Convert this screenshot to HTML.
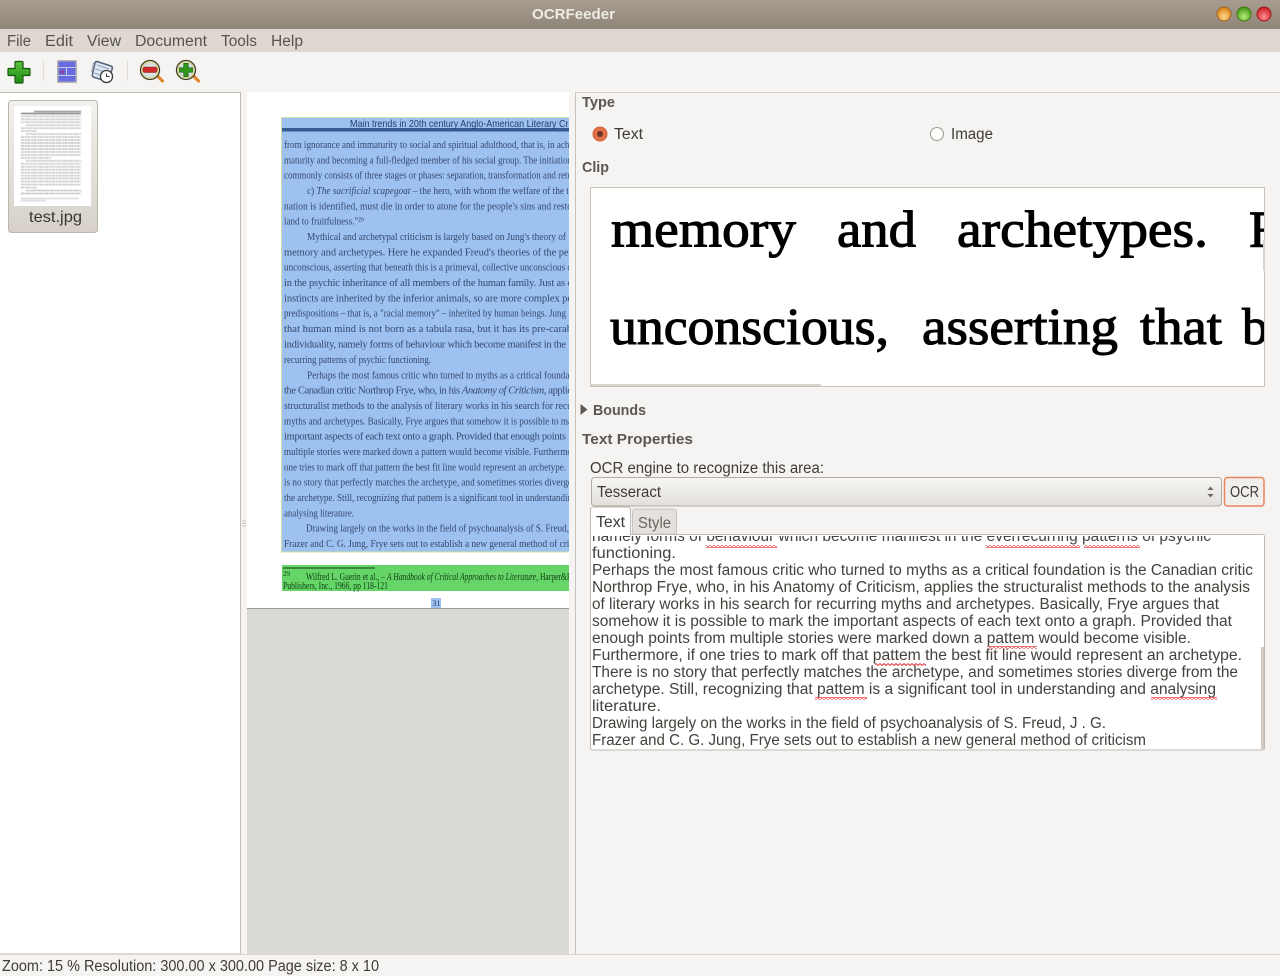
<!DOCTYPE html>
<html lang="en"><head><meta charset="utf-8"><title>OCRFeeder</title>
<style>
html,body{margin:0;padding:0;width:1280px;height:976px;overflow:hidden;background:#f5f4f2}
svg{display:block}
.u{font-family:"Liberation Sans",sans-serif;font-size:15.5px;fill:#3f3c38}
.b{font-weight:bold;fill:#5b5751;font-size:15px}
.d{font-family:"Liberation Serif",serif;font-size:10.5px;fill:#34496f}
.c{font-family:"Liberation Serif",serif;font-size:52px;fill:#000;stroke:#000;stroke-width:1.1}
.t{font-size:15.5px;fill:#45413d;font-family:"Liberation Sans",sans-serif}
</style></head><body>
<svg width="1280" height="976" viewBox="0 0 1280 976" xmlns="http://www.w3.org/2000/svg">
<defs>
<linearGradient id="tb" x1="0" y1="0" x2="0" y2="1"><stop offset="0" stop-color="#a79c8f"/><stop offset="1" stop-color="#8f8578"/></linearGradient>
<linearGradient id="th" x1="0" y1="0" x2="0" y2="1"><stop offset="0" stop-color="#f3f1ee"/><stop offset="1" stop-color="#d6d0c9"/></linearGradient>
<linearGradient id="cb" x1="0" y1="0" x2="0" y2="1"><stop offset="0" stop-color="#f8f7f5"/><stop offset="1" stop-color="#e2dfdb"/></linearGradient>
<linearGradient id="pl" x1="0" y1="0" x2="0" y2="1"><stop offset="0" stop-color="#5cc43c"/><stop offset="1" stop-color="#1f8a18"/></linearGradient>
<radialGradient id="o" cx=".5" cy=".7" r=".6"><stop offset="0" stop-color="#ffd58a"/><stop offset="1" stop-color="#df8a1f"/></radialGradient>
<radialGradient id="g" cx=".5" cy=".7" r=".6"><stop offset="0" stop-color="#b8ec7a"/><stop offset="1" stop-color="#4d9f1e"/></radialGradient>
<radialGradient id="r" cx=".5" cy=".7" r=".6"><stop offset="0" stop-color="#fa8f8f"/><stop offset="1" stop-color="#d5262a"/></radialGradient>
<radialGradient id="lens" cx=".5" cy=".5" r=".6"><stop offset="0" stop-color="#eef4f6"/><stop offset="1" stop-color="#c0ced6"/></radialGradient>
<pattern id="wv" width="4" height="3" patternUnits="userSpaceOnUse"><path d="M0 .5L2 2.500L4 .5" fill="none" stroke="#e8393a" stroke-width="1"/></pattern>
<clipPath id="dc"><rect x="247" y="92" width="322" height="520"/></clipPath>
<clipPath id="cc"><rect x="591" y="188" width="673" height="197"/></clipPath>
<clipPath id="tc"><rect x="591" y="536" width="670" height="213"/></clipPath>
<filter id="bl" x="-5%" y="-5%" width="110%" height="110%"><feGaussianBlur stdDeviation=".35"/></filter>
<filter id="bl2" x="-5%" y="-5%" width="110%" height="110%"><feGaussianBlur stdDeviation=".4"/></filter>
</defs>

<!-- title bar -->
<rect width="1280" height="29" fill="url(#tb)"/>
<text x="532" y="19" textLength="83" lengthAdjust="spacingAndGlyphs" font-family="Liberation Sans" font-weight="bold" font-size="15" fill="#efebe5">OCRFeeder</text>
<circle cx="1224" cy="14" r="7" fill="url(#o)" stroke="#a0601a"/>
<circle cx="1244" cy="14" r="7" fill="url(#g)" stroke="#3f7a16"/>
<circle cx="1264" cy="14" r="7" fill="url(#r)" stroke="#9c1c20"/>

<!-- menu -->
<rect y="29" width="1280" height="23" fill="#dfd8d2"/>
<g class="u" style="fill:#57534d">
<text x="7" y="46" textLength="24" lengthAdjust="spacingAndGlyphs">File</text>
<text x="45" y="46" textLength="28" lengthAdjust="spacingAndGlyphs">Edit</text>
<text x="87" y="46" textLength="34" lengthAdjust="spacingAndGlyphs">View</text>
<text x="135" y="46" textLength="72" lengthAdjust="spacingAndGlyphs">Document</text>
<text x="221" y="46" textLength="36" lengthAdjust="spacingAndGlyphs">Tools</text>
<text x="271" y="46" textLength="32" lengthAdjust="spacingAndGlyphs">Help</text>
</g>

<!-- toolbar -->
<path d="M16 61.500h6a1 1 0 0 1 1 1v6h6a1 1 0 0 1 1 1v5a1 1 0 0 1-1 1h-6v6.500a1 1 0 0 1-1 1h-6a1 1 0 0 1-1-1v-6.500h-6a1 1 0 0 1-1-1v-5a1 1 0 0 1 1-1h6v-6a1 1 0 0 1 1-1z" fill="url(#pl)" stroke="#14570c" stroke-width="1.200"/>
<rect x="43" y="60" width="1" height="21" fill="#e0ddd9"/>
<rect x="127" y="60" width="1" height="21" fill="#e0ddd9"/>
<rect x="57" y="60" width="20" height="23" rx="1" fill="#b4b4b4"/>
<rect x="58.500" y="61.500" width="17" height="20" fill="#666ce0"/>
<path d="M58.500 67.500h17M58.500 75.500h17M66.500 68v7" stroke="#c6c8e6" stroke-width="1"/>
<path d="M62 69l1 2h2l-1.500 1.300.6 2-2.100-1.200-2.100 1.200.6-2-1.500-1.300h2z" fill="#8e3da0"/>
<g>
<path d="M97 61.500l14 4.500a2 2 0 0 1 1.300 2.400l-3.600 11.500a2 2 0 0 1-2.500 1.300l-12.500-4a2 2 0 0 1-1.300-2.500l2.600-12a2 2 0 0 1 2-1.200z" fill="#dfe7f0" stroke="#4f6077" stroke-width="1.500"/>
<path d="M97 65l12 4M95.500 69l10 3.200M94.500 73l7 2.300" stroke="#8ea2bc" stroke-width="1"/>
<path d="M94 63l-2 9" stroke="#7e8da2" stroke-width="2" stroke-dasharray="1.500 1"/>
<circle cx="106.500" cy="76.500" r="6" fill="#fff" stroke="#3a3a3a" stroke-width="1.300"/>
<path d="M106.500 73.500v3h3.200" fill="none" stroke="#333" stroke-width="1"/>
</g>
<g>
<path d="M157 75.500l5.500 5.500" stroke="#e0862a" stroke-width="3.200" stroke-linecap="round"/>
<circle cx="150" cy="70" r="9.500" fill="url(#lens)" stroke="#3b3a28" stroke-width="1.300"/>
<circle cx="150" cy="70" r="8.200" fill="none" stroke="#dcd888" stroke-width="1.300"/>
<rect x="143" y="67" width="14" height="5.500" rx="2" fill="#d22a2a" stroke="#8a1818" stroke-width=".6"/>
</g>
<g>
<path d="M193 75.500l5.500 5.500" stroke="#e0862a" stroke-width="3.200" stroke-linecap="round"/>
<circle cx="186" cy="70" r="9.500" fill="url(#lens)" stroke="#3b3a28" stroke-width="1.300"/>
<circle cx="186" cy="70" r="8.200" fill="none" stroke="#dcd888" stroke-width="1.300"/>
<path d="M183.800 63.500h4.400v4.300h4.300v4.400h-4.300v4.300h-4.400v-4.300h-4.300v-4.400h4.300z" fill="#2e9a1e" stroke="#14570c" stroke-width=".7"/>
</g>

<!-- left panel -->
<rect x="-1" y="92.500" width="241.500" height="861.500" fill="#fff" stroke="#c4bdb3"/>
<rect x="8.500" y="100.500" width="89" height="132" rx="3" fill="url(#th)" stroke="#bdb6ac"/>
<rect x="14" y="106" width="77" height="100" fill="#fff"/>
<g filter="url(#bl2)">
<path d="M34 111.500h47" stroke="#666" stroke-width="1"/>
<path d="M21 113.500h60" stroke="#444" stroke-width="1"/>
<path d="M21 116.300h60M21 119.300h60M21 122.200h60M26 125.200h55M21 128.200h60M21 131.100h16M26 134.100h55M21 137.100h60M21 140h60M21 143h60M21 146h60M21 149h60M21 151.900h60M21 154.900h60M21 157.900h30M26 160.800h55M21 163.800h60M21 166.800h60M21 169.700h60M21 172.700h60M21 175.700h60M21 178.600h60M21 181.600h60M21 184.600h60M21 187.600h16M26 190.500h55M21 193.500h60" stroke="#555" stroke-width=".9" stroke-dasharray="3 .7 2 .5" opacity=".6"/>
<path d="M21 198.500h58M21 200.500h25" stroke="#777" stroke-width=".8" stroke-dasharray="2 .6" opacity=".7"/>
</g>
<text x="29" y="222" textLength="53" lengthAdjust="spacingAndGlyphs" class="u" style="font-size:16px;fill:#38352f">test.jpg</text>

<!-- paned handle -->
<path d="M242 521h4M242 523.500h4M242 526h4M571 521h4M571 523.500h4M571 526h4" stroke="#c9c4bd" stroke-width="1"/>

<!-- document area -->
<rect x="247" y="92" width="322" height="862" fill="#dbd9d4"/>
<rect x="247" y="92" width="322" height="516" fill="#fff"/>
<rect x="247" y="608" width="322" height="1" fill="#9a9a98"/>
<rect x="281.500" y="117.500" width="290" height="434.500" fill="#9dc1f0" stroke="#cfe0a8"/>
<rect x="282" y="128" width="290" height="3.500" fill="#365c92"/>
<rect x="282" y="565" width="290" height="26" fill="#64d566"/>
<rect x="431" y="598" width="10" height="10" fill="#9dc1f0"/>
<rect x="283" y="567.500" width="92" height="1" fill="#0e3a12"/>

<g clip-path="url(#dc)" filter="url(#bl)">
<text x="350" y="127" textLength="225" lengthAdjust="spacingAndGlyphs" font-family="Liberation Sans" font-size="10.500" fill="#243f72">Main trends in 20th century Anglo-American Literary Criti</text>
<g class="d">
<text x="284" y="148" textLength="288" lengthAdjust="spacingAndGlyphs">from ignorance and immaturity to social and spiritual adulthood, that is, in achi</text>
<text x="284" y="163.300" textLength="288" lengthAdjust="spacingAndGlyphs">maturity and becoming a full-fledged member of his social group. The initiation</text>
<text x="284" y="178.700" textLength="288" lengthAdjust="spacingAndGlyphs">commonly consists of three stages or phases: separation, transformation and retu</text>
<text x="307" y="194" textLength="265" lengthAdjust="spacingAndGlyphs">c) <tspan font-style="italic">The sacrificial scapegoat</tspan> – the hero, with whom the welfare of the tr</text>
<text x="284" y="209.300" textLength="288" lengthAdjust="spacingAndGlyphs">nation is identified, must die in order to atone for the people's sins and resto</text>
<text x="284" y="224.700" textLength="80" lengthAdjust="spacingAndGlyphs">land to fruitfulness."²⁹</text>
<text x="307" y="240" textLength="259" lengthAdjust="spacingAndGlyphs">Mythical and archetypal criticism is largely based on Jung's theory of</text>
<text x="284" y="255.300" textLength="288" lengthAdjust="spacing">memory and archetypes. Here he expanded Freud's theories of the per</text>
<text x="284" y="270.700" textLength="288" lengthAdjust="spacingAndGlyphs">unconscious, asserting that beneath this is a primeval, collective unconscious o</text>
<text x="284" y="286" textLength="288" lengthAdjust="spacing">in the psychic inheritance of all members of the human family. Just as c</text>
<text x="284" y="301.300" textLength="288" lengthAdjust="spacing">instincts are inherited by the inferior animals, so are more complex pe</text>
<text x="284" y="316.700" textLength="282" lengthAdjust="spacingAndGlyphs">predispositions – that is, a "racial memory" – inherited by human beings. Jung</text>
<text x="284" y="332" textLength="288" lengthAdjust="spacing">that human mind is not born as a tabula rasa, but it has its pre-carab</text>
<text x="284" y="347.300" textLength="282" lengthAdjust="spacing">individuality, namely forms of behaviour which become manifest in the</text>
<text x="284" y="363" textLength="147" lengthAdjust="spacingAndGlyphs">recurring patterns of psychic functioning.</text>
<text x="307" y="378.300" textLength="265" lengthAdjust="spacingAndGlyphs">Perhaps the most famous critic who turned to myths as a critical foundat</text>
<text x="284" y="393.700" textLength="288" lengthAdjust="spacing">the Canadian critic Northrop Frye, who, in his <tspan font-style="italic">Anatomy of Criticism</tspan>, applie</text>
<text x="284" y="409" textLength="288" lengthAdjust="spacingAndGlyphs">structuralist methods to the analysis of literary works in his search for recu</text>
<text x="284" y="424.300" textLength="288" lengthAdjust="spacingAndGlyphs">myths and archetypes. Basically, Frye argues that somehow it is possible to ma</text>
<text x="284" y="439.700" textLength="282" lengthAdjust="spacing">important aspects of each text onto a graph. Provided that enough points</text>
<text x="284" y="455" textLength="288" lengthAdjust="spacingAndGlyphs">multiple stories were marked down a pattern would become visible. Furthermo</text>
<text x="284" y="470.300" textLength="282" lengthAdjust="spacingAndGlyphs">one tries to mark off that pattern the best fit line would represent an archetype.</text>
<text x="284" y="485.700" textLength="288" lengthAdjust="spacingAndGlyphs">is no story that perfectly matches the archetype, and sometimes stories diverge</text>
<text x="284" y="501" textLength="288" lengthAdjust="spacingAndGlyphs">the archetype. Still, recognizing that pattern is a significant tool in understandin</text>
<text x="284" y="516.300" textLength="70" lengthAdjust="spacingAndGlyphs">analysing literature.</text>
<text x="306" y="531.700" textLength="263" lengthAdjust="spacingAndGlyphs">Drawing largely on the works in the field of psychoanalysis of S. Freud,</text>
<text x="284" y="547" textLength="288" lengthAdjust="spacingAndGlyphs">Frazer and C. G. Jung, Frye sets out to establish a new general method of crit</text>
</g>
<g font-family="Liberation Serif" font-size="10" fill="#123d16">
<text x="283" y="576" font-size="7">29</text>
<text x="306" y="580" textLength="266" lengthAdjust="spacingAndGlyphs">Wilfred L. Guerin et al., – <tspan font-style="italic">A Handbook of Critical Approaches to Literature</tspan>, Harper&amp;R</text>
<text x="283" y="589" textLength="105" lengthAdjust="spacingAndGlyphs">Publishers, Inc., 1966, pp 118-121</text>
</g>
<text x="432.500" y="606" font-family="Liberation Serif" font-size="8" fill="#2b3f68">31</text>
</g>

<!-- right panel -->
<rect x="569" y="92" width="711" height="862" fill="#f5f4f2"/>
<rect x="575" y="92" width="1" height="862" fill="#c8c3ba"/>
<rect x="575" y="92" width="705" height="1" fill="#d6d1c9"/>

<g class="u b">
<text x="582" y="107" textLength="33" lengthAdjust="spacingAndGlyphs">Type</text>
<text x="582" y="172" textLength="27" lengthAdjust="spacingAndGlyphs">Clip</text>
<text x="593" y="415" textLength="53" lengthAdjust="spacingAndGlyphs">Bounds</text>
<text x="582" y="444" textLength="111" lengthAdjust="spacingAndGlyphs">Text Properties</text>
</g>
<circle cx="600" cy="134" r="7" fill="#e67046" stroke="#c65f3a"/>
<circle cx="600" cy="134" r="3" fill="#6a3525"/>
<circle cx="937" cy="134" r="6.500" fill="#fdfdfc" stroke="#9c978f"/>
<g class="u">
<text x="614" y="139" textLength="29" lengthAdjust="spacingAndGlyphs">Text</text>
<text x="951" y="139" textLength="42" lengthAdjust="spacingAndGlyphs">Image</text>
</g>

<!-- clip -->
<rect x="590.500" y="187.500" width="674" height="199" fill="#fff" stroke="#c9c3ba"/>
<g clip-path="url(#cc)" class="c">
<text x="611" y="246.500" textLength="185" lengthAdjust="spacingAndGlyphs">memory</text>
<text x="837" y="246.500" textLength="79" lengthAdjust="spacingAndGlyphs">and</text>
<text x="957" y="246.500" textLength="251" lengthAdjust="spacingAndGlyphs">archetypes.</text>
<text x="1249" y="246.500">F</text>
<text x="610" y="344" textLength="279" lengthAdjust="spacingAndGlyphs">unconscious,</text>
<text x="922" y="344" textLength="196" lengthAdjust="spacingAndGlyphs">asserting</text>
<text x="1140" y="344" textLength="82" lengthAdjust="spacingAndGlyphs">that</text>
<text x="1242" y="344">b</text>
</g>
<rect x="591" y="384" width="230" height="2" fill="#d8d3cc"/>
<rect x="1263" y="240" width="2" height="31" fill="#d8d3cc"/>

<path d="M580.500 404v11l7-5.500z" fill="#5c5852"/>

<text class="u" x="590" y="473" textLength="234" lengthAdjust="spacingAndGlyphs">OCR engine to recognize this area:</text>

<!-- combo -->
<rect x="591.500" y="477.500" width="630" height="28.500" rx="3" fill="url(#cb)" stroke="#b1aca4"/>
<text class="u" x="597" y="497" textLength="64" lengthAdjust="spacingAndGlyphs">Tesseract</text>
<path d="M1207.500 490l3-3.500 3 3.500zM1207.500 494l3 3.500 3-3.500z" fill="#6c6862"/>
<rect x="1224.500" y="477.500" width="39.500" height="28.500" rx="3" fill="#f1efec" stroke="#e8845f" stroke-width="1.500"/>
<text class="u" x="1230" y="497" textLength="29" lengthAdjust="spacingAndGlyphs">OCR</text>

<!-- text view -->
<rect x="590.500" y="534.500" width="674" height="215.500" rx="2" fill="#fff" stroke="#c0baaf"/>
<g clip-path="url(#tc)" class="t">
<text x="592" y="541" textLength="619" lengthAdjust="spacingAndGlyphs">namely forms of behaviour which become manifest in the everrecurring patterns of psychic</text>
<text x="592" y="558" textLength="84" lengthAdjust="spacingAndGlyphs">functioning.</text>
<text x="592" y="575" textLength="661" lengthAdjust="spacingAndGlyphs">Perhaps the most famous critic who turned to myths as a critical foundation is the Canadian critic</text>
<text x="592" y="592" textLength="658" lengthAdjust="spacingAndGlyphs">Northrop Frye, who, in his Anatomy of Criticism, applies the structuralist methods to the analysis</text>
<text x="592" y="609" textLength="627" lengthAdjust="spacingAndGlyphs">of literary works in his search for recurring myths and archetypes. Basically, Frye argues that</text>
<text x="592" y="626" textLength="640" lengthAdjust="spacingAndGlyphs">somehow it is possible to mark the important aspects of each text onto a graph. Provided that</text>
<text x="592" y="643" textLength="599" lengthAdjust="spacingAndGlyphs">enough points from multiple stories were marked down a pattem would become visible.</text>
<text x="592" y="660" textLength="650" lengthAdjust="spacingAndGlyphs">Furthermore, if one tries to mark off that pattem the best fit line would represent an archetype.</text>
<text x="592" y="677" textLength="646" lengthAdjust="spacingAndGlyphs">There is no story that perfectly matches the archetype, and sometimes stories diverge from the</text>
<text x="592" y="694" textLength="624" lengthAdjust="spacingAndGlyphs">archetype. Still, recognizing that pattem is a significant tool in understanding and analysing</text>
<text x="592" y="711" textLength="69" lengthAdjust="spacingAndGlyphs">literature.</text>
<text x="592" y="728" textLength="514" lengthAdjust="spacingAndGlyphs">Drawing largely on the works in the field of psychoanalysis of S. Freud, J . G.</text>
<text x="592" y="745" textLength="554" lengthAdjust="spacingAndGlyphs">Frazer and C. G. Jung, Frye sets out to establish a new general method of criticism</text>
</g>
<g fill="url(#wv)">
<rect x="706" y="545" width="71" height="3"/>
<rect x="986" y="545" width="94" height="3"/>
<rect x="1084" y="545" width="56" height="3"/>
<rect x="987" y="646" width="50" height="3"/>
<rect x="875" y="663" width="51" height="3"/>
<rect x="815" y="697" width="52" height="3"/>
<rect x="1151" y="697" width="66" height="3"/>
</g>
<rect x="1261" y="647" width="3" height="102" fill="#cfcac3"/>

<!-- tabs -->
<path d="M590.500 535v-25a3 3 0 0 1 3-3h34a3 3 0 0 1 3 3v25" fill="#fff" stroke="#c0baaf"/>
<rect x="591" y="533" width="39" height="3" fill="#fff"/>
<path d="M632.500 534v-22a3 3 0 0 1 3-3h38a3 3 0 0 1 3 3v22z" fill="#e4e0db" stroke="#c9c4bc"/>
<text class="u" x="596" y="527" textLength="29" lengthAdjust="spacingAndGlyphs">Text</text>
<text class="u" x="638" y="528" textLength="33" lengthAdjust="spacingAndGlyphs" style="fill:#6b6762">Style</text>

<!-- status -->
<rect y="954" width="1280" height="22" fill="#f5f4f2"/>
<rect y="954" width="1280" height="1" fill="#d8d4ce"/>
<text class="u" x="2" y="971" textLength="377" lengthAdjust="spacingAndGlyphs">Zoom: 15 % Resolution: 300.00 x 300.00 Page size: 8 x 10</text>
</svg>
</body></html>
